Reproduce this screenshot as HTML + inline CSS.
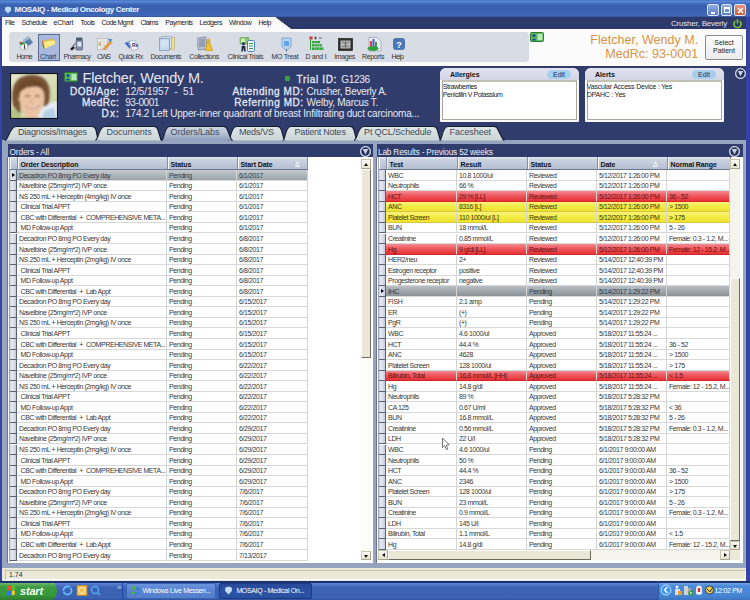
<!DOCTYPE html>
<html><head><meta charset="utf-8">
<style>
*{box-sizing:border-box;margin:0;padding:0}
html,body{width:750px;height:600px;overflow:hidden}
body{position:relative;background:#3444a4;font-family:"Liberation Sans",sans-serif;color:#222}
.a{position:absolute}
.t{position:absolute;white-space:pre;line-height:1}
/* title */
#title{left:0;top:0;width:750px;height:17px;background:linear-gradient(#4474c4 0px,#5a88d8 1.5px,#4a74c4 3px,#3a60b0 5px,#3c62b2 12px,#4068b8 15.5px,#34549c 17px)}
#ttxt{left:14.6px;top:6.2px;font-size:8px;font-weight:bold;color:#f4f6ff}
.wb{position:absolute;top:4px;width:11.5px;height:11.5px;border:1px solid #dfe6f6;border-radius:2px;background:linear-gradient(#8eacdc,#5a80c8)}
/* menu */
#menu{left:2px;top:17px;width:744px;height:12px;background:#fbfbfb}
#menunavy{left:0;top:17px;width:750px;height:12px}
.m{position:absolute;top:18.8px;font-size:7px;color:#222;letter-spacing:-0.15px;white-space:pre;line-height:1}
#tb{left:2px;top:29px;width:744px;height:37px;background:#fbfbfb}
#tbp{left:9px;top:32px;width:520px;height:30px;background:#d8dce5;border-radius:3px}
.tl{position:absolute;top:52.6px;font-size:7px;color:#333;letter-spacing:-0.2px;white-space:pre;line-height:1}
/* header */
#hdr{left:2px;top:66px;width:744px;height:74px;background:#303d6c}
.hl{position:absolute;font-size:10px;font-weight:normal;-webkit-text-stroke:0.3px #e4e8f6;color:#e4e8f6;white-space:pre;line-height:1}
.hv{position:absolute;font-size:10px;color:#e4e8f6;white-space:pre;line-height:1}
.box{position:absolute;top:68px;height:54px;background:#f8f8fa;border-radius:6px 6px 1px 1px}
.box .bh{position:absolute;left:0;top:0;right:0;height:12px;background:linear-gradient(#e0e2ee,#d4d6e6);border-radius:6px 6px 0 0}
.box .bt{position:absolute;left:2px;top:12px;right:2px;bottom:2px;background:#fff;border:1px solid #a8a89c;border-top:2px solid #c0c0b4}
.edit{position:absolute;top:2px;width:24px;height:9px;border-radius:5px;background:#a8cfee;font-size:7px;color:#203060;text-align:center;line-height:9px}
/* tabs */
.tab{position:absolute;top:126px;height:14px}
.tabtxt{position:absolute;top:128.2px;font-size:9px;color:#3c4450;white-space:pre;line-height:1}
/* frame */
#frame{left:2px;top:140px;width:744px;height:428px;background:#97a4c0}
.ph{position:absolute;top:144px;height:12.5px;background:#2f3c6c}
.pht{position:absolute;top:147.6px;font-size:8.3px;color:#eef0f8;white-space:pre;line-height:1}
.circ{position:absolute;width:13px;height:13px}
.grid{position:absolute;top:156.5px;background:#fff;overflow:hidden}
.gh{position:absolute;top:0.5px;height:13px;background:linear-gradient(#e4e8f0 0%,#ccd4e2 20%,#b4bfd2 100%);border-bottom:1px solid #6c7890}
.ghc{position:absolute;top:0;height:12px;border-left:1px solid #f4f6fa;border-right:1px solid #8290a8}
.ght{position:absolute;top:3.6px;font-size:7px;font-weight:bold;color:#111;white-space:pre;line-height:1;letter-spacing:-0.1px}
.row{position:absolute;left:0;height:10.52px;width:400px}
.row .c{position:absolute;top:0;height:10.52px;border-right:1px solid #d4d4d4;border-bottom:1px solid #d8d8d8;font-size:7px;color:#383838;padding-left:2px;padding-top:1.5px;white-space:pre;line-height:1;letter-spacing:-0.42px}
.row .ind{position:absolute;left:1.5px;top:0;width:7.5px;height:10.52px;background:linear-gradient(90deg,#d0d6e2,#e4e8f0 40%,#c4ccdc);border-right:1px solid #5a6478;border-bottom:1px solid #5a6478}
.tri{position:absolute;left:2px;top:2.5px;border-top:2.7px solid transparent;border-bottom:2.7px solid transparent;border-left:3.5px solid #000}
.sel .c{background:linear-gradient(#c4cace,#9aa4aa);color:#3a4048}
.sel2 .c{background:linear-gradient(#b8bec4,#8a9298);color:#303840}
.red .c{background:linear-gradient(#f48a90 0%,#ee5a60 45%,#e63236 100%);color:#6a1212;border-bottom-color:#d82428}
.yel .c{background:linear-gradient(#f8f27a 0%,#f4ec44 50%,#eee232 100%);color:#3e3a10;border-bottom-color:#d8c838}
.sb{position:absolute;background:#f1efe6}
.sbb{position:absolute;background:linear-gradient(#fbfaf4,#e8e4d4);border:1px solid #c8c4b0;border-right-color:#a8a490;border-bottom-color:#a8a490}
.thumb{position:absolute;background:#ebe7d6;border-right:1px solid #6c6c60;border-bottom:1px solid #6c6c60;border-left:1px solid #fff;border-top:1px solid #fff}
.up:after,.dn:after{content:"";position:absolute;left:2px;border-left:2.5px solid transparent;border-right:2.5px solid transparent}
.up:after{top:3px;border-bottom:3px solid #111}
.dn:after{top:3.5px;border-top:3px solid #111}
/* status */
#status{left:2px;top:568px;width:744px;height:12.5px;background:#ece9d8}
#taskbar{left:0;top:580.5px;width:750px;height:19.5px;background:linear-gradient(#1c3070 0px,#1e3478 1.5px,#5a80cc 2.5px,#4a70c0 4.5px,#3c62b4 7px,#3c62b2 17px,#2c4ea0 19.5px)}
</style></head><body>
<div id="title" class="a"></div>
<svg class="a" style="left:4px;top:6px" width="8" height="8" viewBox="0 0 8 8"><path d="M1 1.5 L4 0.5 L7 1.5 L7 4.5 L4 7.5 L1 4.5Z" fill="#b8d8f8"/></svg>
<div id="ttxt" class="t" style="letter-spacing:-0.348px">MOSAIQ - Medical Oncology Center</div>
<div class="wb" style="left:707px"><div class="a" style="left:2.5px;top:6.5px;width:4px;height:2px;background:#fff"></div></div>
<div class="wb" style="left:720.5px"><div class="a" style="left:2px;top:2px;width:6px;height:6px;border:1px solid #fff;border-top-width:2px"></div></div>
<div class="wb" style="left:734px;width:12px;background:linear-gradient(#e89478,#cc5a3c)"><svg class="a" style="left:1.5px;top:1.5px" width="7" height="7" viewBox="0 0 7 7"><path d="M1 1L6 6M6 1L1 6" stroke="#fff" stroke-width="1.5"/></svg></div>

<div id="menu" class="a"></div>
<svg class="a" style="left:0;top:17px" width="750" height="12"><path d="M276 0 L746 0 L746 12 L292 12 Z" fill="#2c396a"/><path d="M276 0 L292 12" stroke="#202a50" stroke-width="1"/></svg>
<div class="m" style="letter-spacing:-0.427px;left:5.0px">File</div>
<div class="m" style="letter-spacing:-0.486px;left:21.6px">Schedule</div>
<div class="m" style="letter-spacing:-0.243px;left:53.6px">eChart</div>
<div class="m" style="letter-spacing:-0.486px;left:80.6px">Tools</div>
<div class="m" style="letter-spacing:-0.548px;left:101.6px">Code Mgmt</div>
<div class="m" style="letter-spacing:-0.718px;left:140.6px">Claims</div>
<div class="m" style="letter-spacing:-0.475px;left:165.3px">Payments</div>
<div class="m" style="letter-spacing:-0.416px;left:199.6px">Ledgers</div>
<div class="m" style="letter-spacing:-0.421px;left:228.9px">Window</div>
<div class="m" style="letter-spacing:-0.469px;left:258.4px">Help</div>
<div class="t" style="left:671px;top:20px;font-size:8px;color:#e0e4f0;letter-spacing:-0.2px">Crusher, Beverly</div>
<svg class="a" style="left:732px;top:18px" width="11" height="11" viewBox="0 0 11 11"><path d="M3.2 3.2 A3.6 3.6 0 1 0 7.8 3.2" fill="none" stroke="#7cc830" stroke-width="1.6"/><path d="M5.5 1.2 V5.5" stroke="#7cc830" stroke-width="1.6"/></svg>

<div id="tb" class="a"></div>
<div id="tbp" class="a"></div>
<div class="a" style="left:37.5px;top:34px;width:22.5px;height:27px;background:#aab9dd;border:1px solid #5c6c90"></div>

<svg class="a" style="left:17px;top:35px" width="17" height="16" viewBox="0 0 17 16">
 <path d="M6 5 L11.5 1.5 L16 7.5 L10.5 11.5 Z" fill="#5a84b0"/>
 <path d="M6 5 L11.5 1.5 L13 3.5 L7.5 7Z" fill="#9ab8d4"/>
 <path d="M9 6 L14 9.5" stroke="#3a5c88" stroke-width="0.6"/>
 <circle cx="7" cy="11.5" r="3.8" fill="#f2f2f2" stroke="#909090" stroke-width="0.6"/>
 <path d="M7.5 9.5 V14" stroke="#404040" stroke-width="1.1"/>
 <path d="M2.5 8 L6 6.5 L8.5 8.5 L4 10.5Z" fill="#3aa050"/>
 <circle cx="3.5" cy="7.8" r="1.1" fill="#d04040"/>
</svg>
<svg class="a" style="left:41px;top:38px" width="15" height="11" viewBox="0 0 15 11">
 <path d="M1.5 3 L12 0.8 L14.5 5 L3.5 10.5Z" fill="#e8c860" stroke="#c89838" stroke-width="0.5"/>
 <path d="M2.5 4 L13.5 2.5 L14.5 6 L4 10.5Z" fill="#f6ea80"/>
 <path d="M4 5.5 L13 4" stroke="#fff6c0" stroke-width="0.6"/>
 <path d="M1.5 3 L2.5 9" stroke="#c05030" stroke-width="0.9"/>
 <path d="M2.3 7 L3 10.5" stroke="#40a040" stroke-width="1.1"/>
</svg>
<svg class="a" style="left:69px;top:36.5px" width="15" height="14" viewBox="0 0 15 14">
 <rect x="7" y="0.5" width="6.5" height="2.5" rx="0.5" fill="#506070"/>
 <rect x="7" y="3" width="6.5" height="10" rx="1" fill="#8090a8" stroke="#404850" stroke-width="0.6"/>
 <rect x="8.3" y="5" width="4" height="4.5" fill="#e0e8f0"/>
 <path d="M1 12 L4 9 L6 11 L3 13.5Z" fill="#202020"/>
 <path d="M4 9 L6 6.5" stroke="#202020" stroke-width="0.9"/>
</svg>
<svg class="a" style="left:97px;top:38px" width="16" height="12" viewBox="0 0 16 12">
 <rect x="0.5" y="0.5" width="10" height="11" fill="#eeeeee" stroke="#a8a8a8" stroke-width="0.6"/>
 <path d="M0.5 4 H10.5 M0.5 7.5 H10.5 M4 0.5 V11.5 M7 0.5 V11.5" stroke="#c4c4c4" stroke-width="0.5"/>
 <rect x="1.5" y="4.5" width="2.5" height="3" fill="#c8b070"/>
 <path d="M6 10.5 L13.5 3 L15 4.5 L7.5 12Z" fill="#f09a30" stroke="#b06a20" stroke-width="0.4"/>
 <path d="M11 0.5 L15.5 1.5 L13 4" fill="#3a80d0"/>
</svg>
<svg class="a" style="left:123.5px;top:39.5px" width="15" height="11" viewBox="0 0 15 11">
 <path d="M0.5 3 L6 1 L6 9 Z" fill="#3a6cc8"/>
 <path d="M3 2 L7 0.5 L7 8Z" fill="#7aa0e0"/>
 <path d="M5 1 L11 0.5 L14.5 9 L8 10.5Z" fill="#f4f4f8" stroke="#8090b0" stroke-width="0.5"/>
 <text x="8" y="6.5" font-size="5" font-weight="bold" fill="#283878" font-family="Liberation Sans">Rx</text>
</svg>
<svg class="a" style="left:158.5px;top:36px" width="16" height="15" viewBox="0 0 16 15">
 <rect x="5" y="1.5" width="10.5" height="12" fill="#f0e090" stroke="#b0a060" stroke-width="0.5"/>
 <rect x="2.5" y="0.5" width="10" height="12" fill="#d4e4f4" stroke="#8098b8" stroke-width="0.6"/>
 <rect x="0.5" y="2.5" width="10" height="12" fill="#c4d8ee" stroke="#6a84a8" stroke-width="0.6"/>
 <path d="M2 5 H9 M2 7 H9 M2 9 H9 M2 11 H7" stroke="#f8f8f8" stroke-width="0.6"/>
</svg>
<svg class="a" style="left:197px;top:36px" width="16" height="15" viewBox="0 0 16 15">
 <rect x="0.5" y="1.5" width="9" height="12" fill="#b8c4d8" stroke="#6a7488" stroke-width="0.6" transform="rotate(-8 5 7)"/>
 <path d="M2 4 H8 M2 6 H8 M2 8 H8 M2 10 H8" stroke="#404860" stroke-width="0.6"/>
 <circle cx="11.5" cy="4.5" r="2" fill="#e0b030"/>
 <path d="M8 15 L10 6.5 L13 6.5 L15.5 15Z" fill="#f0c030" stroke="#b08010" stroke-width="0.5"/>
</svg>
<svg class="a" style="left:238.5px;top:36.5px" width="16" height="15" viewBox="0 0 16 15">
 <rect x="1" y="0.5" width="9" height="6.5" rx="0.8" fill="#88c870" stroke="#4a8a3a" stroke-width="0.5"/>
 <rect x="2" y="1.5" width="4" height="4.5" fill="#d0f0b0"/>
 <rect x="8.5" y="3.5" width="7" height="11" rx="1.2" fill="#f0f8ff" stroke="#3a78c0" stroke-width="0.9"/>
 <path d="M10 6.5 H14 M10 9 H14 M10 11.5 H14" stroke="#40a040" stroke-width="1.1"/>
 <circle cx="4.5" cy="6.8" r="1.7" fill="#284058"/>
 <path d="M2.3 14.5 L2.8 9 L6.2 9 L6.7 14.5 L5.2 14.5 L4.5 11 L3.8 14.5Z" fill="#1c2c40"/>
</svg>
<svg class="a" style="left:280.5px;top:36.5px" width="11" height="15" viewBox="0 0 11 15">
 <path d="M1 1 L10 1 L10 10 L6.5 12.5 L4.5 12.5 L1 10Z" fill="#b8d4f0" stroke="#7090b8" stroke-width="0.7"/>
 <rect x="3" y="4" width="5" height="5" fill="#60a8e8"/>
 <path d="M5.5 12.5 V14.5" stroke="#405070" stroke-width="1"/>
</svg>
<svg class="a" style="left:308.5px;top:36px" width="15" height="15" viewBox="0 0 15 15">
 <rect x="0.5" y="0.5" width="3" height="3" fill="#e03030"/>
 <path d="M5 2 H8 M6.5 0.5 V3.5 M10 2 H13" stroke="#303030" stroke-width="0.7"/>
 <path d="M1.5 3.5 V14" stroke="#30a030" stroke-width="1"/>
 <rect x="3" y="5" width="8" height="2.2" fill="#30a040"/>
 <rect x="3" y="8.2" width="10" height="2.2" fill="#30a040"/>
 <rect x="3" y="11.4" width="11.5" height="2.6" fill="#30a040"/>
 <path d="M5.5 5 V14 M8 5 V14 M10.5 8 V14 M13 11.4 V14" stroke="#a0e0a0" stroke-width="0.5"/>
</svg>
<svg class="a" style="left:337.5px;top:37.5px" width="15" height="13" viewBox="0 0 15 13">
 <rect x="0.5" y="0.5" width="14" height="12" fill="#303030" stroke="#101010" stroke-width="0.6"/>
 <rect x="2.5" y="2.5" width="10" height="8" fill="#b8b8b8"/>
 <path d="M4 4 Q7.5 7 11 4 M4 9 Q7.5 6 11 9 M7.5 3 V10" stroke="#606060" stroke-width="0.8" fill="none"/>
</svg>
<svg class="a" style="left:366.5px;top:36.5px" width="15" height="15" viewBox="0 0 15 15">
 <path d="M2 0.5 L10 0.5 L14 4.5 L14 14 L2 14Z" fill="#eaeef6" stroke="#8090a8" stroke-width="0.6"/>
 <rect x="3" y="4" width="2" height="6" fill="#e04040"/>
 <rect x="5.5" y="2" width="2" height="8" fill="#4060d0"/>
 <rect x="8" y="5" width="2" height="5" fill="#40a040"/>
 <ellipse cx="6" cy="11.5" rx="5.5" ry="2.5" fill="#30a040"/>
</svg>
<svg class="a" style="left:392.5px;top:38px" width="12" height="12" viewBox="0 0 12 12">
 <rect x="0.5" y="0.5" width="11" height="11" rx="2" fill="#4878b8" stroke="#2c5490" stroke-width="0.6"/>
 <text x="6" y="9.5" font-size="9" font-weight="bold" fill="#fff" text-anchor="middle" font-family="Liberation Sans">?</text>
</svg>

<div class="tl" style="letter-spacing:-0.896px;left:16.6px">Home</div>
<div class="tl" style="letter-spacing:-0.231px;left:40.1px;color:#283868">Chart</div>
<div class="tl" style="letter-spacing:-0.574px;left:63.5px">Pharmacy</div>
<div class="tl" style="letter-spacing:-1.222px;left:97.1px">CWS</div>
<div class="tl" style="letter-spacing:-0.515px;left:118.4px">Quick Rx</div>
<div class="tl" style="letter-spacing:-0.526px;left:150.4px">Documents</div>
<div class="tl" style="letter-spacing:-0.435px;left:189.3px">Collections</div>
<div class="tl" style="letter-spacing:-0.388px;left:227.6px">Clinical Trials</div>
<div class="tl" style="letter-spacing:-0.284px;left:271.4px">MO Treat</div>
<div class="tl" style="letter-spacing:-0.246px;left:305.5px">D and I</div>
<div class="tl" style="letter-spacing:-0.394px;left:334.3px">Images</div>
<div class="tl" style="letter-spacing:-0.353px;left:362.0px">Reports</div>
<div class="tl" style="letter-spacing:-0.702px;left:391.6px">Help</div>
<svg class="a" style="left:530px;top:32px" width="14" height="10" viewBox="0 0 14 10"><rect x="0.5" y="0.5" width="13" height="9" rx="1" fill="#5cb85c" stroke="#2f7a2f"/><rect x="7.5" y="2" width="5" height="6" fill="#b8e8b8"/><circle cx="4" cy="3.6" r="1.6" fill="#1a4f9a"/><path d="M1.5 8.5 Q4 4.5 6.5 8.5Z" fill="#1a4f9a"/></svg>
<div class="t" style="letter-spacing:0.026px;left:590.3px;top:34.2px;font-size:12.5px;color:#d99248">Fletcher, Wendy M.</div>
<div class="t" style="letter-spacing:0.044px;left:605.2px;top:48.2px;font-size:12.5px;color:#d99248">MedRc: 93-0001</div>
<div class="a" style="left:705px;top:35px;width:38px;height:25px;background:linear-gradient(#fdfdfd,#ececec);border:1px solid #8a8a8a;border-radius:2px"></div>
<div class="t" style="left:705px;top:38.5px;width:38px;text-align:center;font-size:7px;color:#222;line-height:8.2px">Select<br>Patient</div>

<div id="hdr" class="a"></div>

<svg class="a" style="left:10px;top:73px" width="48" height="46" viewBox="0 0 48 46">
 <defs>
  <linearGradient id="pbg" x1="0" y1="0" x2="1" y2="1"><stop offset="0" stop-color="#e4e6c8"/><stop offset="0.5" stop-color="#dcdfb8"/><stop offset="1" stop-color="#c4d09a"/></linearGradient>
  <filter id="pbl" x="-10%" y="-10%" width="120%" height="120%"><feGaussianBlur stdDeviation="0.9"/></filter>
  <clipPath id="pcl"><rect x="1" y="1" width="46" height="44"/></clipPath>
 </defs>
 <rect x="0" y="0" width="48" height="46" fill="#10141c"/>
 <g clip-path="url(#pcl)"><g filter="url(#pbl)">
 <rect x="0" y="0" width="48" height="46" fill="url(#pbg)"/>
 <path d="M0 36 L10 38 L12 46 L0 46Z" fill="#b4c488"/>
 <path d="M26 46 L32 34 L40 30 L48 28 L48 46Z" fill="#e4eef4"/>
 <path d="M34 38 L44 34 L46 46 L32 46Z" fill="#b8d0e4"/>
 <path d="M4 36 C0 26 1 12 8 6 C15 0 29 0 35 6 C41 12 41 22 39 30 C37 33 35 34 33 33 L28 18 L13 18 Z" fill="#7c5436"/>
 <path d="M10 19 C10 14 16 12 22 12 C28 12 33 15 34 21 C35 29 33 37 28 42 C25 45 18 45 15 42 C11 37 9 27 10 19Z" fill="#ecc4a4"/>
 <path d="M6 23 C6 12 13 6 22 6 C30 6 36 11 36 19 C32 15 28 13 22 14 C16 14 11 17 8 23 Z" fill="#6e4a2c"/>
 <path d="M5 29 C4 35 6 39 11 40 L10 27Z" fill="#7c5436"/>
 <path d="M15 23.5 Q17.5 22 20 23.5 M25 23.5 Q27.5 22 30 23.5" stroke="#4a3020" stroke-width="1.1" fill="none"/>
 <path d="M22 25 L21 30 L23 30.5" stroke="#c09070" stroke-width="0.7" fill="none"/>
 <path d="M16 33 Q23 38 30 32 Q23 35.5 16 33Z" fill="#f8f4f0"/>
 <path d="M15.5 32.5 Q23 39 30.5 31.5" stroke="#a06058" stroke-width="0.8" fill="none"/>
 <path d="M13 44 L30 44 L31 46 L12 46Z" fill="#dab498"/>
 </g></g>
</svg>

<svg class="a" style="left:64px;top:72px" width="14" height="10" viewBox="0 0 14 10"><rect x="0.5" y="0.5" width="13" height="9" rx="1" fill="#5cb85c" stroke="#2f7a2f"/><rect x="7.5" y="2" width="5" height="6" fill="#b8e8b8"/><circle cx="4" cy="3.6" r="1.6" fill="#1a4f9a"/><path d="M1.5 8.5 Q4 4.5 6.5 8.5Z" fill="#1a4f9a"/></svg>
<div class="t" style="letter-spacing:-0.191px;left:82.5px;top:71px;font-size:14.5px;color:#e4e8f6">Fletcher, Wendy M.</div>
<div class="hl" style="letter-spacing:0.538px;left:70px;top:87px">DOB/Age:</div>
<div class="hl" style="letter-spacing:0.469px;left:82px;top:98px">MedRc:</div>
<div class="hl" style="letter-spacing:1.100px;left:101.6px;top:109px">Dx:</div>
<div class="hv" style="letter-spacing:-0.084px;left:125.2px;top:87px">12/5/1957  -  51</div>
<div class="hv" style="letter-spacing:-0.417px;left:125.2px;top:98px">93-0001</div>
<div class="hv" style="letter-spacing:-0.208px;left:125.2px;top:109px">174.2 Left Upper-inner quadrant of breast Infiltrating duct carcinoma...</div>
<div class="a" style="left:284.5px;top:76px;width:5px;height:5px;background:#3aa040;border-radius:1px"></div>
<div class="hl" style="letter-spacing:0.645px;left:296.6px;top:75px">Trial ID:</div>
<div class="hv" style="letter-spacing:-0.308px;left:341.3px;top:75px">G1236</div>
<div class="hl" style="letter-spacing:0.594px;left:232.6px;top:87px">Attending MD:</div>
<div class="hl" style="letter-spacing:0.546px;left:234.3px;top:98px">Referring MD:</div>
<div class="hv" style="letter-spacing:-0.266px;left:306.6px;top:87px">Crusher, Beverly A.</div>
<div class="hv" style="letter-spacing:-0.252px;left:306.6px;top:98px">Welby, Marcus T.</div>

<div class="box" style="left:440px;width:139px"><div class="bh"></div><div class="bt"></div>
<div class="t" style="left:10px;top:2.8px;font-size:7px;font-weight:bold;color:#111">Allergies</div>
<div class="edit" style="left:107px">Edit</div>
<div class="t" style="letter-spacing:-0.436px;left:2.8px;top:15.2px;font-size:7px;color:#222">Strawberries</div><div class="t" style="letter-spacing:-0.418px;left:2.8px;top:22.6px;font-size:7px;color:#222">Penicillin V Potassium</div>
</div>
<div class="box" style="left:585px;width:139px"><div class="bh"></div><div class="bt"></div>
<div class="t" style="left:10px;top:2.8px;font-size:7px;font-weight:bold;color:#111">Alerts</div>
<div class="edit" style="left:107px">Edit</div>
<div class="t" style="letter-spacing:-0.215px;left:1.8px;top:15.2px;font-size:7px;color:#222">Vascular Access Device : Yes</div><div class="t" style="letter-spacing:-0.233px;left:1.8px;top:22.6px;font-size:7px;color:#222">DPAHC : Yes</div>
</div>
<div class="circ" style="left:733.5px;top:66px"><svg width="13" height="13" viewBox="0 0 13 13"><circle cx="6.5" cy="6.5" r="5.9" fill="#1c2448"/><circle cx="6.5" cy="6.5" r="4.9" fill="#243058" stroke="#c4cce0" stroke-width="1.5"/><path d="M3.7 3.9 L9.3 3.9 L6.5 9.6Z" fill="#c8d0e4"/></svg></div>

<div id="frame" class="a"></div>
<svg class="a" style="left:0;top:0" width="750" height="150"><defs><linearGradient id="tin" x1="0" y1="0" x2="0" y2="1"><stop offset="0" stop-color="#dee6e6"/><stop offset="1" stop-color="#cdd6d8"/></linearGradient><linearGradient id="tact" x1="0" y1="0" x2="0" y2="1"><stop offset="0" stop-color="#d0d8e0"/><stop offset="0.5" stop-color="#b4c0d0"/><stop offset="1" stop-color="#909dbb"/></linearGradient></defs><path d="M5 140.5 C8 140.5 10 126.5 16 126.5 L92 126.5 Q95 126.5 95.8 129.5 L98.0 139.5 Q98.5 140.5 99.5 140.5 Z" fill="url(#tin)"/><path d="M5 140.5 C8 140.5 10 126.5 16 126.5 L92 126.5 Q95 126.5 95.8 129.5 L98.0 139.5 Q98.5 140.5 99.5 140.5" fill="none" stroke="#141a30" stroke-width="1.1"/><path d="M95.3 140.5 C98.3 140.5 98.7 126.5 104.7 126.5 L154 126.5 Q157 126.5 157.8 129.5 L160.9 139.5 Q161.4 140.5 162.4 140.5 Z" fill="url(#tin)"/><path d="M95.3 140.5 C98.3 140.5 98.7 126.5 104.7 126.5 L154 126.5 Q157 126.5 157.8 129.5 L160.9 139.5 Q161.4 140.5 162.4 140.5" fill="none" stroke="#141a30" stroke-width="1.1"/><path d="M228 140.5 C231 140.5 230.5 126.5 236.5 126.5 L277.4 126.5 Q280.4 126.5 281.2 129.5 L284.2 139.5 Q284.7 140.5 285.7 140.5 Z" fill="url(#tin)"/><path d="M228 140.5 C231 140.5 230.5 126.5 236.5 126.5 L277.4 126.5 Q280.4 126.5 281.2 129.5 L284.2 139.5 Q284.7 140.5 285.7 140.5" fill="none" stroke="#141a30" stroke-width="1.1"/><path d="M282.6 140.5 C285.6 140.5 284.9 126.5 290.9 126.5 L350 126.5 Q353 126.5 353.8 129.5 L356.5 139.5 Q357 140.5 358 140.5 Z" fill="url(#tin)"/><path d="M282.6 140.5 C285.6 140.5 284.9 126.5 290.9 126.5 L350 126.5 Q353 126.5 353.8 129.5 L356.5 139.5 Q357 140.5 358 140.5" fill="none" stroke="#141a30" stroke-width="1.1"/><path d="M354 140.5 C357 140.5 357.7 126.5 363.7 126.5 L433.4 126.5 Q436.4 126.5 437.2 129.5 L440.1 139.5 Q440.6 140.5 441.6 140.5 Z" fill="url(#tin)"/><path d="M354 140.5 C357 140.5 357.7 126.5 363.7 126.5 L433.4 126.5 Q436.4 126.5 437.2 129.5 L440.1 139.5 Q440.6 140.5 441.6 140.5" fill="none" stroke="#141a30" stroke-width="1.1"/><path d="M439.5 140.5 C442.5 140.5 441.9 126.5 447.9 126.5 L494 126.5 Q497 126.5 497.8 129.5 L503.0 139.5 Q503.5 140.5 504.5 140.5 Z" fill="url(#tin)"/><path d="M439.5 140.5 C442.5 140.5 441.9 126.5 447.9 126.5 L494 126.5 Q497 126.5 497.8 129.5 L503.0 139.5 Q503.5 140.5 504.5 140.5" fill="none" stroke="#141a30" stroke-width="1.1"/><path d="M161.4 140.5 C164.4 140.5 163.8 126.5 169.8 126.5 L223.5 126.5 Q226.5 126.5 227.3 129.5 L231.3 139.5 Q231.8 140.5 232.8 140.5 Z" fill="url(#tact)"/><path d="M161.4 140.5 C164.4 140.5 163.8 126.5 169.8 126.5 L223.5 126.5 Q226.5 126.5 227.3 129.5 L231.3 139.5 Q231.8 140.5 232.8 140.5" fill="none" stroke="#141a30" stroke-width="1.1"/></svg>
<div class="tabtxt" style="letter-spacing:-0.156px;left:17.900000000000002px;color:#404a58">Diagnosis/Images</div>
<div class="tabtxt" style="letter-spacing:-0.041px;left:106.6px;color:#404a58">Documents</div>
<div class="tabtxt" style="letter-spacing:-0.269px;left:239.1px;color:#404a58">Meds/VS</div>
<div class="tabtxt" style="letter-spacing:-0.228px;left:294.6px;color:#404a58">Patient Notes</div>
<div class="tabtxt" style="letter-spacing:-0.160px;left:364.1px;color:#404a58">Pt QCL/Schedule</div>
<div class="tabtxt" style="letter-spacing:-0.066px;left:449.6px;color:#404a58">Facesheet</div>
<div class="tabtxt" style="letter-spacing:-0.073px;left:170.6px;color:#3e4a5c">Orders/Labs</div>

<!-- orders panel -->
<div class="a" style="left:8px;top:143.5px;width:365px;height:419px;background:#fff"></div>
<div class="ph" style="left:8px;width:365px"></div>
<div class="pht" style="letter-spacing:-0.182px;left:9.6px">Orders - All</div>
<div class="circ" style="left:359.3px;top:144.1px"><svg width="13" height="13" viewBox="0 0 13 13"><circle cx="6.5" cy="6.5" r="5.9" fill="#1c2448"/><circle cx="6.5" cy="6.5" r="4.9" fill="#243058" stroke="#c4cce0" stroke-width="1.5"/><path d="M3.7 3.9 L9.3 3.9 L6.5 9.6Z" fill="#c8d0e4"/></svg></div>
<div class="a" style="left:7px;top:156.5px;width:1px;height:406px;background:#6a7490"></div><div class="grid" style="left:8px;width:364px;height:405px"><div class="a" style="left:1px;top:0;width:1px;height:405px;background:#a0a8b8"></div>
  <div class="gh" style="left:1.5px;width:298.5px">
    <div class="ghc" style="left:0;width:8px"></div>
    <div class="ghc" style="left:8px;width:150px"></div>
    <div class="ghc" style="left:158px;width:70px"></div>
    <div class="ghc" style="left:228px;width:70.5px"></div>
    <div class="ght" style="left:11px">Order Description</div>
    <div class="ght" style="left:161px">Status</div>
    <div class="ght" style="left:231px">Start Date</div>
    <svg class="a" style="left:285.8px;top:4px" width="5" height="6" viewBox="0 0 5 6"><path d="M2.5 0.5 L4.5 5.5 L0.5 5.5Z" fill="none" stroke="#f4f6fa" stroke-width="1"/></svg>
  </div>
  <div class="a" style="left:0;top:13.5px;width:364px;height:400px">
<div class="row sel" style="top:0.20px"><div class="ind"><span class="tri"></span></div><div class="c" style="left:9px;width:150px">Decadron PO 8mg PO Every day</div><div class="c" style="left:159px;width:70px">Pending</div><div class="c" style="left:229px;width:71px">6/1/2017</div></div>
<div class="row" style="top:10.75px"><div class="ind"></div><div class="c" style="left:9px;width:150px">Navelbine (25mg/m*2) IVP once</div><div class="c" style="left:159px;width:70px">Pending</div><div class="c" style="left:229px;width:71px">6/1/2017</div></div>
<div class="row" style="top:21.30px"><div class="ind"></div><div class="c" style="left:9px;width:150px">NS 250 mL + Herceptin (4mg/kg) IV once</div><div class="c" style="left:159px;width:70px">Pending</div><div class="c" style="left:229px;width:71px">6/1/2017</div></div>
<div class="row" style="top:31.85px"><div class="ind"></div><div class="c" style="left:9px;width:150px"> Clinical Trial APPT</div><div class="c" style="left:159px;width:70px">Pending</div><div class="c" style="left:229px;width:71px">6/1/2017</div></div>
<div class="row" style="top:42.40px"><div class="ind"></div><div class="c" style="left:9px;width:150px"> CBC with Differential  +  COMPREHENSIVE META...</div><div class="c" style="left:159px;width:70px">Pending</div><div class="c" style="left:229px;width:71px">6/1/2017</div></div>
<div class="row" style="top:52.95px"><div class="ind"></div><div class="c" style="left:9px;width:150px"> MD Follow-up Appt</div><div class="c" style="left:159px;width:70px">Pending</div><div class="c" style="left:229px;width:71px">6/1/2017</div></div>
<div class="row" style="top:63.50px"><div class="ind"></div><div class="c" style="left:9px;width:150px">Decadron PO 8mg PO Every day</div><div class="c" style="left:159px;width:70px">Pending</div><div class="c" style="left:229px;width:71px">6/8/2017</div></div>
<div class="row" style="top:74.05px"><div class="ind"></div><div class="c" style="left:9px;width:150px">Navelbine (25mg/m*2) IVP once</div><div class="c" style="left:159px;width:70px">Pending</div><div class="c" style="left:229px;width:71px">6/8/2017</div></div>
<div class="row" style="top:84.60px"><div class="ind"></div><div class="c" style="left:9px;width:150px">NS 250 mL + Herceptin (2mg/kg) IV once</div><div class="c" style="left:159px;width:70px">Pending</div><div class="c" style="left:229px;width:71px">6/8/2017</div></div>
<div class="row" style="top:95.15px"><div class="ind"></div><div class="c" style="left:9px;width:150px"> Clinical Trial APPT</div><div class="c" style="left:159px;width:70px">Pending</div><div class="c" style="left:229px;width:71px">6/8/2017</div></div>
<div class="row" style="top:105.70px"><div class="ind"></div><div class="c" style="left:9px;width:150px"> MD Follow-up Appt</div><div class="c" style="left:159px;width:70px">Pending</div><div class="c" style="left:229px;width:71px">6/8/2017</div></div>
<div class="row" style="top:116.25px"><div class="ind"></div><div class="c" style="left:9px;width:150px"> CBC with Differential  +  Lab Appt</div><div class="c" style="left:159px;width:70px">Pending</div><div class="c" style="left:229px;width:71px">6/8/2017</div></div>
<div class="row" style="top:126.80px"><div class="ind"></div><div class="c" style="left:9px;width:150px">Decadron PO 8mg PO Every day</div><div class="c" style="left:159px;width:70px">Pending</div><div class="c" style="left:229px;width:71px">6/15/2017</div></div>
<div class="row" style="top:137.35px"><div class="ind"></div><div class="c" style="left:9px;width:150px">Navelbine (25mg/m*2) IVP once</div><div class="c" style="left:159px;width:70px">Pending</div><div class="c" style="left:229px;width:71px">6/15/2017</div></div>
<div class="row" style="top:147.90px"><div class="ind"></div><div class="c" style="left:9px;width:150px">NS 250 mL + Herceptin (2mg/kg) IV once</div><div class="c" style="left:159px;width:70px">Pending</div><div class="c" style="left:229px;width:71px">6/15/2017</div></div>
<div class="row" style="top:158.45px"><div class="ind"></div><div class="c" style="left:9px;width:150px"> Clinical Trial APPT</div><div class="c" style="left:159px;width:70px">Pending</div><div class="c" style="left:229px;width:71px">6/15/2017</div></div>
<div class="row" style="top:169.00px"><div class="ind"></div><div class="c" style="left:9px;width:150px"> CBC with Differential  +  COMPREHENSIVE META...</div><div class="c" style="left:159px;width:70px">Pending</div><div class="c" style="left:229px;width:71px">6/15/2017</div></div>
<div class="row" style="top:179.55px"><div class="ind"></div><div class="c" style="left:9px;width:150px"> MD Follow-up Appt</div><div class="c" style="left:159px;width:70px">Pending</div><div class="c" style="left:229px;width:71px">6/15/2017</div></div>
<div class="row" style="top:190.10px"><div class="ind"></div><div class="c" style="left:9px;width:150px">Decadron PO 8mg PO Every day</div><div class="c" style="left:159px;width:70px">Pending</div><div class="c" style="left:229px;width:71px">6/22/2017</div></div>
<div class="row" style="top:200.65px"><div class="ind"></div><div class="c" style="left:9px;width:150px">Navelbine (25mg/m*2) IVP once</div><div class="c" style="left:159px;width:70px">Pending</div><div class="c" style="left:229px;width:71px">6/22/2017</div></div>
<div class="row" style="top:211.20px"><div class="ind"></div><div class="c" style="left:9px;width:150px">NS 250 mL + Herceptin (2mg/kg) IV once</div><div class="c" style="left:159px;width:70px">Pending</div><div class="c" style="left:229px;width:71px">6/22/2017</div></div>
<div class="row" style="top:221.75px"><div class="ind"></div><div class="c" style="left:9px;width:150px"> Clinical Trial APPT</div><div class="c" style="left:159px;width:70px">Pending</div><div class="c" style="left:229px;width:71px">6/22/2017</div></div>
<div class="row" style="top:232.30px"><div class="ind"></div><div class="c" style="left:9px;width:150px"> MD Follow-up Appt</div><div class="c" style="left:159px;width:70px">Pending</div><div class="c" style="left:229px;width:71px">6/22/2017</div></div>
<div class="row" style="top:242.85px"><div class="ind"></div><div class="c" style="left:9px;width:150px"> CBC with Differential  +  Lab Appt</div><div class="c" style="left:159px;width:70px">Pending</div><div class="c" style="left:229px;width:71px">6/22/2017</div></div>
<div class="row" style="top:253.40px"><div class="ind"></div><div class="c" style="left:9px;width:150px">Decadron PO 8mg PO Every day</div><div class="c" style="left:159px;width:70px">Pending</div><div class="c" style="left:229px;width:71px">6/29/2017</div></div>
<div class="row" style="top:263.95px"><div class="ind"></div><div class="c" style="left:9px;width:150px">Navelbine (25mg/m*2) IVP once</div><div class="c" style="left:159px;width:70px">Pending</div><div class="c" style="left:229px;width:71px">6/29/2017</div></div>
<div class="row" style="top:274.50px"><div class="ind"></div><div class="c" style="left:9px;width:150px">NS 250 mL + Herceptin (2mg/kg) IV once</div><div class="c" style="left:159px;width:70px">Pending</div><div class="c" style="left:229px;width:71px">6/29/2017</div></div>
<div class="row" style="top:285.05px"><div class="ind"></div><div class="c" style="left:9px;width:150px"> Clinical Trial APPT</div><div class="c" style="left:159px;width:70px">Pending</div><div class="c" style="left:229px;width:71px">6/29/2017</div></div>
<div class="row" style="top:295.60px"><div class="ind"></div><div class="c" style="left:9px;width:150px"> CBC with Differential  +  COMPREHENSIVE META...</div><div class="c" style="left:159px;width:70px">Pending</div><div class="c" style="left:229px;width:71px">6/29/2017</div></div>
<div class="row" style="top:306.15px"><div class="ind"></div><div class="c" style="left:9px;width:150px"> MD Follow-up Appt</div><div class="c" style="left:159px;width:70px">Pending</div><div class="c" style="left:229px;width:71px">6/29/2017</div></div>
<div class="row" style="top:316.70px"><div class="ind"></div><div class="c" style="left:9px;width:150px">Decadron PO 8mg PO Every day</div><div class="c" style="left:159px;width:70px">Pending</div><div class="c" style="left:229px;width:71px">7/6/2017</div></div>
<div class="row" style="top:327.25px"><div class="ind"></div><div class="c" style="left:9px;width:150px">Navelbine (25mg/m*2) IVP once</div><div class="c" style="left:159px;width:70px">Pending</div><div class="c" style="left:229px;width:71px">7/6/2017</div></div>
<div class="row" style="top:337.80px"><div class="ind"></div><div class="c" style="left:9px;width:150px">NS 250 mL + Herceptin (2mg/kg) IV once</div><div class="c" style="left:159px;width:70px">Pending</div><div class="c" style="left:229px;width:71px">7/6/2017</div></div>
<div class="row" style="top:348.35px"><div class="ind"></div><div class="c" style="left:9px;width:150px"> Clinical Trial APPT</div><div class="c" style="left:159px;width:70px">Pending</div><div class="c" style="left:229px;width:71px">7/6/2017</div></div>
<div class="row" style="top:358.90px"><div class="ind"></div><div class="c" style="left:9px;width:150px"> MD Follow-up Appt</div><div class="c" style="left:159px;width:70px">Pending</div><div class="c" style="left:229px;width:71px">7/6/2017</div></div>
<div class="row" style="top:369.45px"><div class="ind"></div><div class="c" style="left:9px;width:150px"> CBC with Differential  +  Lab Appt</div><div class="c" style="left:159px;width:70px">Pending</div><div class="c" style="left:229px;width:71px">7/6/2017</div></div>
<div class="row" style="top:380.00px"><div class="ind"></div><div class="c" style="left:9px;width:150px">Decadron PO 8mg PO Every day</div><div class="c" style="left:159px;width:70px">Pending</div><div class="c" style="left:229px;width:71px">7/13/2017</div></div>
  </div>
  <div class="sb" style="left:353px;top:2px;width:9.5px;height:401px;background:#fbfbf8"></div>
  <div class="thumb" style="left:353px;top:12px;width:9.5px;height:189.5px"></div>
  <div class="sbb up" style="left:353px;top:2px;width:9.5px;height:10px"></div>
  <div class="sbb dn" style="left:353px;top:394px;width:9.5px;height:9.5px"></div>
</div>

<!-- lab panel -->
<div class="a" style="left:377px;top:143.5px;width:365.5px;height:419px;background:#fff"></div>
<div class="ph" style="left:377px;width:365.5px"></div>
<div class="pht" style="letter-spacing:-0.201px;left:378px">Lab Results - Previous 52 weeks</div>
<div class="circ" style="left:728.2px;top:144.1px"><svg width="13" height="13" viewBox="0 0 13 13"><circle cx="6.5" cy="6.5" r="5.9" fill="#1c2448"/><circle cx="6.5" cy="6.5" r="4.9" fill="#243058" stroke="#c4cce0" stroke-width="1.5"/><path d="M3.7 3.9 L9.3 3.9 L6.5 9.6Z" fill="#c8d0e4"/></svg></div>
<div class="a" style="left:376px;top:156.5px;width:1px;height:406px;background:#6a7490"></div><div class="grid" style="left:377px;width:363px;height:405px"><div class="a" style="left:1px;top:0;width:1px;height:395px;background:#a0a8b8"></div>
  <div class="gh" style="left:1.5px;width:352px">
    <div class="ghc" style="left:0;width:8px"></div>
    <div class="ghc" style="left:8px;width:71px"></div>
    <div class="ghc" style="left:79px;width:70px"></div>
    <div class="ghc" style="left:149px;width:70px"></div>
    <div class="ghc" style="left:219px;width:70px"></div>
    <div class="ghc" style="left:289px;width:63px"></div>
    <div class="ght" style="left:11px">Test</div>
    <div class="ght" style="left:82px">Result</div>
    <div class="ght" style="left:152px">Status</div>
    <div class="ght" style="left:222px">Date</div>
    <div class="ght" style="left:292px">Normal Range</div>
    <svg class="a" style="left:274.8px;top:4px" width="5" height="6" viewBox="0 0 5 6"><path d="M2.5 0.5 L4.5 5.5 L0.5 5.5Z" fill="none" stroke="#f4f6fa" stroke-width="1"/></svg>
  </div>
  <div class="a" style="left:0;top:13.5px;width:353px;height:380px;overflow:hidden">
<div class="row" style="top:0.20px"><div class="ind"></div><div class="c" style="left:9px;width:71px">WBC</div><div class="c" style="left:80px;width:70px">10.8 1000/ul</div><div class="c" style="left:150px;width:70px">Reviewed</div><div class="c" style="left:220px;width:70px">5/12/2017 1:26:00 PM</div><div class="c" style="left:290px;width:63px"></div></div>
<div class="row" style="top:10.75px"><div class="ind"></div><div class="c" style="left:9px;width:71px">Neutrophils</div><div class="c" style="left:80px;width:70px">66 %</div><div class="c" style="left:150px;width:70px">Reviewed</div><div class="c" style="left:220px;width:70px">5/12/2017 1:26:00 PM</div><div class="c" style="left:290px;width:63px"></div></div>
<div class="row red" style="top:21.30px"><div class="ind"></div><div class="c" style="left:9px;width:71px">HCT</div><div class="c" style="left:80px;width:70px">29 % [LL]</div><div class="c" style="left:150px;width:70px">Reviewed</div><div class="c" style="left:220px;width:70px">5/12/2017 1:26:00 PM</div><div class="c" style="left:290px;width:63px">36 - 52</div></div>
<div class="row yel" style="top:31.85px"><div class="ind"></div><div class="c" style="left:9px;width:71px">ANC</div><div class="c" style="left:80px;width:70px">8316 [L]</div><div class="c" style="left:150px;width:70px">Reviewed</div><div class="c" style="left:220px;width:70px">5/12/2017 1:26:00 PM</div><div class="c" style="left:290px;width:63px">&gt; 1500</div></div>
<div class="row yel" style="top:42.40px"><div class="ind"></div><div class="c" style="left:9px;width:71px">Platelet Screen</div><div class="c" style="left:80px;width:70px">110 1000/ul [L]</div><div class="c" style="left:150px;width:70px">Reviewed</div><div class="c" style="left:220px;width:70px">5/12/2017 1:26:00 PM</div><div class="c" style="left:290px;width:63px">&gt; 175</div></div>
<div class="row" style="top:52.95px"><div class="ind"></div><div class="c" style="left:9px;width:71px">BUN</div><div class="c" style="left:80px;width:70px">18 mmol/L</div><div class="c" style="left:150px;width:70px">Reviewed</div><div class="c" style="left:220px;width:70px">5/12/2017 1:26:00 PM</div><div class="c" style="left:290px;width:63px">5 - 26</div></div>
<div class="row" style="top:63.50px"><div class="ind"></div><div class="c" style="left:9px;width:71px">Creatinine</div><div class="c" style="left:80px;width:70px">0.85 mmol/L</div><div class="c" style="left:150px;width:70px">Reviewed</div><div class="c" style="left:220px;width:70px">5/12/2017 1:26:00 PM</div><div class="c" style="left:290px;width:63px">Female: 0.3 - 1.2, M...</div></div>
<div class="row red" style="top:74.05px"><div class="ind"></div><div class="c" style="left:9px;width:71px">Hg</div><div class="c" style="left:80px;width:70px">9 g/dl [LL]</div><div class="c" style="left:150px;width:70px">Reviewed</div><div class="c" style="left:220px;width:70px">5/12/2017 1:26:00 PM</div><div class="c" style="left:290px;width:63px">Female: 12 - 15.2, M...</div></div>
<div class="row" style="top:84.60px"><div class="ind"></div><div class="c" style="left:9px;width:71px">HER2/neu</div><div class="c" style="left:80px;width:70px">2+</div><div class="c" style="left:150px;width:70px">Reviewed</div><div class="c" style="left:220px;width:70px">5/14/2017 12:40:39 PM</div><div class="c" style="left:290px;width:63px"></div></div>
<div class="row" style="top:95.15px"><div class="ind"></div><div class="c" style="left:9px;width:71px">Estrogen receptor</div><div class="c" style="left:80px;width:70px">positive</div><div class="c" style="left:150px;width:70px">Reviewed</div><div class="c" style="left:220px;width:70px">5/14/2017 12:40:39 PM</div><div class="c" style="left:290px;width:63px"></div></div>
<div class="row" style="top:105.70px"><div class="ind"></div><div class="c" style="left:9px;width:71px">Progesterone receptor</div><div class="c" style="left:80px;width:70px">negative</div><div class="c" style="left:150px;width:70px">Reviewed</div><div class="c" style="left:220px;width:70px">5/14/2017 12:40:39 PM</div><div class="c" style="left:290px;width:63px"></div></div>
<div class="row sel2" style="top:116.25px"><div class="ind"><span class="tri"></span></div><div class="c" style="left:9px;width:71px">IHC</div><div class="c" style="left:80px;width:70px"></div><div class="c" style="left:150px;width:70px">Pending</div><div class="c" style="left:220px;width:70px">5/14/2017 1:29:22 PM</div><div class="c" style="left:290px;width:63px"></div></div>
<div class="row" style="top:126.80px"><div class="ind"></div><div class="c" style="left:9px;width:71px">FISH</div><div class="c" style="left:80px;width:70px">2.1 amp</div><div class="c" style="left:150px;width:70px">Pending</div><div class="c" style="left:220px;width:70px">5/14/2017 1:29:22 PM</div><div class="c" style="left:290px;width:63px"></div></div>
<div class="row" style="top:137.35px"><div class="ind"></div><div class="c" style="left:9px;width:71px">ER</div><div class="c" style="left:80px;width:70px">(+)</div><div class="c" style="left:150px;width:70px">Pending</div><div class="c" style="left:220px;width:70px">5/14/2017 1:29:22 PM</div><div class="c" style="left:290px;width:63px"></div></div>
<div class="row" style="top:147.90px"><div class="ind"></div><div class="c" style="left:9px;width:71px">PgR</div><div class="c" style="left:80px;width:70px">(+)</div><div class="c" style="left:150px;width:70px">Pending</div><div class="c" style="left:220px;width:70px">5/14/2017 1:29:22 PM</div><div class="c" style="left:290px;width:63px"></div></div>
<div class="row" style="top:158.45px"><div class="ind"></div><div class="c" style="left:9px;width:71px">WBC</div><div class="c" style="left:80px;width:70px">4.6 1000/ul</div><div class="c" style="left:150px;width:70px">Approved</div><div class="c" style="left:220px;width:70px">5/18/2017 11:55:24 ...</div><div class="c" style="left:290px;width:63px"></div></div>
<div class="row" style="top:169.00px"><div class="ind"></div><div class="c" style="left:9px;width:71px">HCT</div><div class="c" style="left:80px;width:70px">44.4 %</div><div class="c" style="left:150px;width:70px">Approved</div><div class="c" style="left:220px;width:70px">5/18/2017 11:55:24 ...</div><div class="c" style="left:290px;width:63px">36 - 52</div></div>
<div class="row" style="top:179.55px"><div class="ind"></div><div class="c" style="left:9px;width:71px">ANC</div><div class="c" style="left:80px;width:70px">4628</div><div class="c" style="left:150px;width:70px">Approved</div><div class="c" style="left:220px;width:70px">5/18/2017 11:55:24 ...</div><div class="c" style="left:290px;width:63px">&gt; 1500</div></div>
<div class="row" style="top:190.10px"><div class="ind"></div><div class="c" style="left:9px;width:71px">Platelet Screen</div><div class="c" style="left:80px;width:70px">128 1000/ul</div><div class="c" style="left:150px;width:70px">Approved</div><div class="c" style="left:220px;width:70px">5/18/2017 11:55:24 ...</div><div class="c" style="left:290px;width:63px">&gt; 175</div></div>
<div class="row red" style="top:200.65px"><div class="ind"></div><div class="c" style="left:9px;width:71px">Bilirubin, Total</div><div class="c" style="left:80px;width:70px">16.8 mmol/L [HH]</div><div class="c" style="left:150px;width:70px">Approved</div><div class="c" style="left:220px;width:70px">5/18/2017 11:55:24 ...</div><div class="c" style="left:290px;width:63px">&lt; 1.5</div></div>
<div class="row" style="top:211.20px"><div class="ind"></div><div class="c" style="left:9px;width:71px">Hg</div><div class="c" style="left:80px;width:70px">14.8 g/dl</div><div class="c" style="left:150px;width:70px">Approved</div><div class="c" style="left:220px;width:70px">5/18/2017 11:55:24 ...</div><div class="c" style="left:290px;width:63px">Female: 12 - 15.2, M...</div></div>
<div class="row" style="top:221.75px"><div class="ind"></div><div class="c" style="left:9px;width:71px">Neutrophils</div><div class="c" style="left:80px;width:70px">89 %</div><div class="c" style="left:150px;width:70px">Approved</div><div class="c" style="left:220px;width:70px">5/18/2017 5:28:32 PM</div><div class="c" style="left:290px;width:63px"></div></div>
<div class="row" style="top:232.30px"><div class="ind"></div><div class="c" style="left:9px;width:71px">CA 125</div><div class="c" style="left:80px;width:70px">0.67 U/ml</div><div class="c" style="left:150px;width:70px">Approved</div><div class="c" style="left:220px;width:70px">5/18/2017 5:28:32 PM</div><div class="c" style="left:290px;width:63px">&lt; 36</div></div>
<div class="row" style="top:242.85px"><div class="ind"></div><div class="c" style="left:9px;width:71px">BUN</div><div class="c" style="left:80px;width:70px">16.8 mmol/L</div><div class="c" style="left:150px;width:70px">Approved</div><div class="c" style="left:220px;width:70px">5/18/2017 5:28:32 PM</div><div class="c" style="left:290px;width:63px">5 - 26</div></div>
<div class="row" style="top:253.40px"><div class="ind"></div><div class="c" style="left:9px;width:71px">Creatinine</div><div class="c" style="left:80px;width:70px">0.56 mmol/L</div><div class="c" style="left:150px;width:70px">Approved</div><div class="c" style="left:220px;width:70px">5/18/2017 5:28:32 PM</div><div class="c" style="left:290px;width:63px">Female: 0.3 - 1.2, M...</div></div>
<div class="row" style="top:263.95px"><div class="ind"></div><div class="c" style="left:9px;width:71px">LDH</div><div class="c" style="left:80px;width:70px">22 U/l</div><div class="c" style="left:150px;width:70px">Approved</div><div class="c" style="left:220px;width:70px">5/18/2017 5:28:32 PM</div><div class="c" style="left:290px;width:63px"></div></div>
<div class="row" style="top:274.50px"><div class="ind"></div><div class="c" style="left:9px;width:71px">WBC</div><div class="c" style="left:80px;width:70px">4.6 1000/ul</div><div class="c" style="left:150px;width:70px">Pending</div><div class="c" style="left:220px;width:70px">6/1/2017 9:00:00 AM</div><div class="c" style="left:290px;width:63px"></div></div>
<div class="row" style="top:285.05px"><div class="ind"></div><div class="c" style="left:9px;width:71px">Neutrophils</div><div class="c" style="left:80px;width:70px">50 %</div><div class="c" style="left:150px;width:70px">Pending</div><div class="c" style="left:220px;width:70px">6/1/2017 9:00:00 AM</div><div class="c" style="left:290px;width:63px"></div></div>
<div class="row" style="top:295.60px"><div class="ind"></div><div class="c" style="left:9px;width:71px">HCT</div><div class="c" style="left:80px;width:70px">44.4 %</div><div class="c" style="left:150px;width:70px">Pending</div><div class="c" style="left:220px;width:70px">6/1/2017 9:00:00 AM</div><div class="c" style="left:290px;width:63px">36 - 52</div></div>
<div class="row" style="top:306.15px"><div class="ind"></div><div class="c" style="left:9px;width:71px">ANC</div><div class="c" style="left:80px;width:70px">2346</div><div class="c" style="left:150px;width:70px">Pending</div><div class="c" style="left:220px;width:70px">6/1/2017 9:00:00 AM</div><div class="c" style="left:290px;width:63px">&gt; 1500</div></div>
<div class="row" style="top:316.70px"><div class="ind"></div><div class="c" style="left:9px;width:71px">Platelet Screen</div><div class="c" style="left:80px;width:70px">128 1000/ul</div><div class="c" style="left:150px;width:70px">Pending</div><div class="c" style="left:220px;width:70px">6/1/2017 9:00:00 AM</div><div class="c" style="left:290px;width:63px">&gt; 175</div></div>
<div class="row" style="top:327.25px"><div class="ind"></div><div class="c" style="left:9px;width:71px">BUN</div><div class="c" style="left:80px;width:70px">23 mmol/L</div><div class="c" style="left:150px;width:70px">Pending</div><div class="c" style="left:220px;width:70px">6/1/2017 9:00:00 AM</div><div class="c" style="left:290px;width:63px">5 - 26</div></div>
<div class="row" style="top:337.80px"><div class="ind"></div><div class="c" style="left:9px;width:71px">Creatinine</div><div class="c" style="left:80px;width:70px">0.9 mmol/L</div><div class="c" style="left:150px;width:70px">Pending</div><div class="c" style="left:220px;width:70px">6/1/2017 9:00:00 AM</div><div class="c" style="left:290px;width:63px">Female: 0.3 - 1.2, M...</div></div>
<div class="row" style="top:348.35px"><div class="ind"></div><div class="c" style="left:9px;width:71px">LDH</div><div class="c" style="left:80px;width:70px">145 U/l</div><div class="c" style="left:150px;width:70px">Pending</div><div class="c" style="left:220px;width:70px">6/1/2017 9:00:00 AM</div><div class="c" style="left:290px;width:63px"></div></div>
<div class="row" style="top:358.90px"><div class="ind"></div><div class="c" style="left:9px;width:71px">Bilirubin, Total</div><div class="c" style="left:80px;width:70px">1.1 mmol/L</div><div class="c" style="left:150px;width:70px">Pending</div><div class="c" style="left:220px;width:70px">6/1/2017 9:00:00 AM</div><div class="c" style="left:290px;width:63px">&lt; 1.5</div></div>
<div class="row" style="top:369.45px"><div class="ind"></div><div class="c" style="left:9px;width:71px">Hg</div><div class="c" style="left:80px;width:70px">14.8 g/dl</div><div class="c" style="left:150px;width:70px">Pending</div><div class="c" style="left:220px;width:70px">6/1/2017 9:00:00 AM</div><div class="c" style="left:290px;width:63px">Female: 12 - 15.2, M...</div></div>
  </div>
  <div class="sb" style="left:353px;top:2px;width:9.5px;height:391.5px;background:#f4f3ec"></div>
  <div class="thumb" style="left:353px;top:121px;width:9.5px;height:263px"></div>
  <div class="sbb up" style="left:353px;top:2px;width:9.5px;height:10px"></div>
  <div class="sbb dn" style="left:353px;top:384px;width:9.5px;height:9.5px"></div>
  <div class="sb" style="left:1px;top:393.5px;width:362px;height:10px;background:#f4f3ec"></div>
  <div class="thumb" style="left:11px;top:393.5px;width:203px;height:9.5px"></div>
  <div class="sbb" style="left:1px;top:393.5px;width:9.5px;height:9.5px"><div class="a" style="left:2.5px;top:2px;border-top:2.5px solid transparent;border-bottom:2.5px solid transparent;border-right:3px solid #111"></div></div>
  <div class="sbb" style="left:343px;top:393.5px;width:9.5px;height:9.5px"><div class="a" style="left:3px;top:2px;border-top:2.5px solid transparent;border-bottom:2.5px solid transparent;border-left:3px solid #111"></div></div>
  <div class="sb" style="left:353px;top:393.5px;width:9.5px;height:10px;background:#ece9d8"></div>
</div>

<svg class="a" style="left:440px;top:436px" width="12" height="16" viewBox="440 436 12 16"><path d="M442.5 438 L442.5 447.6 L444.6 445.6 L446.4 449.6 L447.9 449 L446.2 445.1 L449.2 444.8 Z" fill="#fff" stroke="#505050" stroke-width="0.8" stroke-linejoin="round"/></svg>
<div id="status" class="a"></div>
<div class="a" style="left:5px;top:569.5px;width:741px;height:10px;border:1px solid #c4c0b0;border-right-color:#fff;border-bottom-color:#fff"></div>
<div class="t" style="left:9px;top:571px;font-size:7px;color:#333">1.74</div>

<div id="taskbar" class="a"></div>

<svg class="a" style="left:0;top:580.5px" width="57" height="19.5" viewBox="0 0 57 19.5">
 <defs><linearGradient id="st" x1="0" y1="0" x2="0" y2="1"><stop offset="0" stop-color="#1c3070"/><stop offset="0.1" stop-color="#1c3070"/><stop offset="0.12" stop-color="#68b868"/><stop offset="0.3" stop-color="#3e9a42"/><stop offset="0.7" stop-color="#389a3c"/><stop offset="1" stop-color="#2a7a30"/></linearGradient></defs>
 <path d="M0 0 H48 Q57 0 57 9.75 Q57 19.5 48 19.5 H0Z" fill="url(#st)"/>
 <path d="M7.5 5 L11 4.5 L11 9 L7 9.5Z" fill="#f05028"/><path d="M11.8 4.3 L15.5 4 L15 8.7 L11.8 9Z" fill="#50c030"/>
 <path d="M7 10.3 L11 9.8 L11 14.3 L6.5 14.8Z" fill="#2878f0"/><path d="M11.8 9.8 L15 9.5 L14.5 14 L11.8 14.3Z" fill="#f8d020"/>
</svg>
<div class="t" style="left:20px;top:586.2px;font-size:11px;font-weight:bold;font-style:italic;color:#f4fff0;letter-spacing:-0.2px">start</div>
<svg class="a" style="left:62px;top:584px" width="40" height="13" viewBox="0 0 40 13">
 <circle cx="5.5" cy="6.5" r="4" fill="none" stroke="#6cb8f8" stroke-width="1.8"/><path d="M1 8 Q6 2 11 4" stroke="#2a70d0" stroke-width="1" fill="none"/>
 <rect x="15" y="1.5" width="10" height="10" fill="#f0c050" stroke="#c08020" stroke-width="0.6"/><circle cx="20" cy="6.5" r="3" fill="none" stroke="#f8f0d0" stroke-width="1"/>
 <circle cx="33" cy="6" r="3.5" fill="none" stroke="#50a8f0" stroke-width="1.5"/><path d="M35.5 8.5 L38 11" stroke="#50a8f0" stroke-width="1.5"/>
</svg>
<div class="t" style="left:117px;top:583.5px;font-size:8px;color:#b8d0f8">»</div>
<div class="a" style="left:121.5px;top:582px;width:1px;height:17px;background:#1a48a8"></div>
<div class="a" style="left:126px;top:582.5px;width:89.5px;height:16px;border-radius:2px;background:linear-gradient(#6a94dc,#5a84d0 40%,#5480cc);border:1px solid #3a64b0"></div>
<svg class="a" style="left:130px;top:585px" width="11" height="10" viewBox="0 0 11 10"><circle cx="4" cy="3" r="2" fill="#58b030"/><circle cx="7.5" cy="3.5" r="1.8" fill="#3080e0"/><path d="M0.5 9 Q4 4 7 9Z" fill="#58b030"/><path d="M4 9 Q7.5 5 10.5 9Z" fill="#3080e0"/></svg>
<div class="t" style="letter-spacing:-0.342px;left:142.5px;top:587px;font-size:7px;color:#fff">Windows Live Messen...</div>
<div class="a" style="left:219px;top:582.5px;width:93px;height:16px;border-radius:2px;background:linear-gradient(#284a98,#2c52a4 50%,#2a50a0);border:1px solid #1c3a80"></div>
<svg class="a" style="left:223.5px;top:585.5px" width="9" height="9" viewBox="0 0 8 8"><path d="M1 1.5 L4 0.5 L7 1.5 L7 4.5 L4 7.5 L1 4.5Z" fill="#c0dcf8"/></svg>
<div class="t" style="letter-spacing:-0.351px;left:236.4px;top:587px;font-size:7px;color:#fff">MOSAIQ - Medical On...</div>
<div class="a" style="left:657.5px;top:580.5px;width:92.5px;height:19.5px;background:linear-gradient(#1c3070 0px,#1c3070 1.5px,#6aa4e4 2.5px,#4a8ad8 5px,#4684d2 80%,#3a74c0);border-left:1px solid #2a5aa8"></div>
<svg class="a" style="left:660px;top:583px" width="60" height="14" viewBox="0 0 60 14">
 <circle cx="6" cy="7" r="5" fill="#3a98f0" stroke="#e0f0ff" stroke-width="0.8"/><path d="M7.5 4 L4.5 7 L7.5 10" stroke="#fff" stroke-width="1.3" fill="none"/>
 <circle cx="17" cy="4" r="1.5" fill="#f4f4f4"/><rect x="15" y="6" width="5" height="6" fill="#d8e0e8"/><rect x="18" y="8" width="4" height="4" fill="#f0a020"/>
 <rect x="24" y="3" width="4" height="9" fill="#d0d0d0"/><rect x="28" y="5" width="3" height="7" fill="#a0a8b0"/><circle cx="31" cy="10" r="2.6" fill="#30a040"/><path d="M30.3 8.8 L32.3 10 L30.3 11.2Z" fill="#fff"/>
 <path d="M39 2.5 Q42 2.5 42 6 L42 11 Q39 12.5 36 11 L36 6 Q36 2.5 39 2.5Z" fill="#f0f0f0"/><path d="M37.8 5 L40.2 5 L40.2 9 L37.8 9Z" fill="#e03030"/>
 <circle cx="49.5" cy="7" r="4" fill="#f0d050" stroke="#404040" stroke-width="1"/><path d="M47 6 L50 9 L53 4" stroke="#303030" stroke-width="1" fill="none"/>
</svg>
<div class="t" style="letter-spacing:-0.310px;left:714.6px;top:587px;font-size:7px;color:#fff">12:02 PM</div>

</body></html>
